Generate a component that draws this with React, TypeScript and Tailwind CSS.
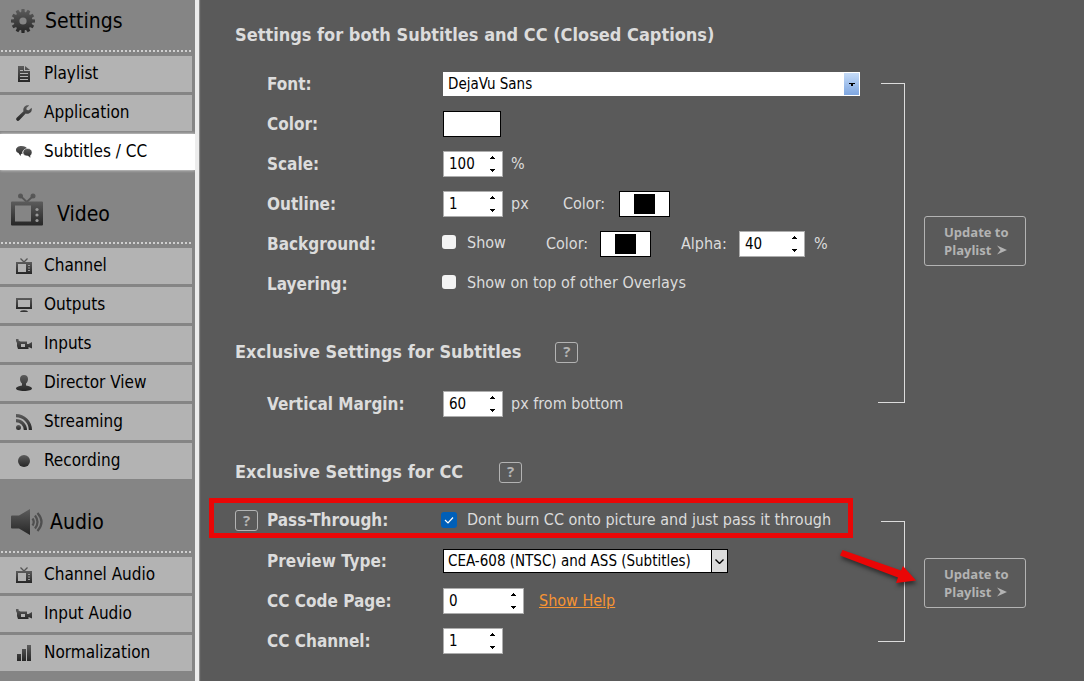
import React from "react";

type IconProps = { className?: string };

function Svg({ box, className, children }: { box: string; className?: string; children: React.ReactNode }) {
  return (
    <svg viewBox={box} className={className} fill="url(#ink)" aria-hidden="true">
      {children}
    </svg>
  );
}

function GearIcon() {
  const teeth = Array.from({ length: 12 }, (_, i) => i * 30);
  return (
    <svg viewBox="0 0 24 24" className="size-6" aria-hidden="true">
      <defs>
        <mask id="gearMask">
          {teeth.map((a) => (
            <path key={a} d="M10 5 L10.500 0 H13.500 L14 5 Z" fill="#fff" transform={`rotate(${a} 12 12)`} />
          ))}
          <circle cx="12" cy="12" r="9.300" fill="#fff" />
          <circle cx="12" cy="12" r="3.600" fill="#000" />
        </mask>
      </defs>
      <rect width="24" height="24" fill="url(#ink)" mask="url(#gearMask)" />
    </svg>
  );
}

function TvBigIcon() {
  return (
    <Svg box="0 0 32 33" className="h-[33px] w-8">
      <circle cx="9.5" cy="3" r="2.5" fill="#585858" />
      <circle cx="22" cy="3" r="2.5" fill="#585858" />
      <path d="M9.5 3 L15.8 9 L22 3" fill="none" stroke="#555" strokeWidth="1.8" />
      <path
        fillRule="evenodd"
        d="M1 8.500H31Q32 8.500 32 9.500V31.500Q32 32.500 31 32.500H1Q0 32.500 0 31.500V9.500Q0 8.500 1 8.500ZM4 12.500V28.500H20V12.500Z"
      />
      <circle cx="26" cy="16.500" r="1.600" fill="#999" />
      <circle cx="26" cy="22" r="1.600" fill="#999" />
      <circle cx="26" cy="27.500" r="1.600" fill="#999" />
    </Svg>
  );
}

function SpeakerIcon() {
  return (
    <Svg box="0 0 32 26" className="h-[26px] w-8">
      <path d="M0 7.500Q0 6.500 1 6.500H8L19 0V26L8 19.500H1Q0 19.500 0 18.500Z" />
      <g fill="none" stroke="#4f4f4f" strokeWidth="2.200">
        <path d="M21.500 9.500Q24 13 21.500 16.500" />
        <path d="M24 6.500Q29 13 24 19.500" />
        <path d="M26.500 4Q34.500 13 26.500 22" />
      </g>
    </Svg>
  );
}

function DocIcon({ className }: IconProps) {
  return (
    <Svg box="0 0 16 16" className={className}>
      <path d="M2 0H8V5H14V16H2Z M9 0L14 4H9Z" />
      <path d="M4 4.500H7M4 7.500H12M4 10.500H12M4 13.500H12" stroke="#b3b3b3" strokeWidth="1" />
    </Svg>
  );
}

function WrenchIcon({ className }: IconProps) {
  return (
    <Svg box="0 0 16 16" className={className}>
      <path d="M15.600 2.700 L12.800 5.300 L10.700 5.100 L10.400 3 L13.200.400 C10.600-.6 7.200 1.300 7.300 5.200 L7.500 6.300 L.7 12.700 C-1 14.600 1.400 17 3.300 15.300 L9.700 8.500 C12.800 9.600 16.800 7 15.600 2.700Z" />
    </Svg>
  );
}

function ChatIcon({ className }: IconProps) {
  return (
    <Svg box="0 0 16 16" className={className}>
      <path d="M5.500 2C8.500 2 10.500 3 11 4.500C8.500 4.800 6.300 6.500 6.300 8.800L6.500 10L5 9.800L4.500 12L2.500 9C1 8.500 0 7.500 0 6C0 3.500 2.500 2 5.500 2Z" />
      <path
        d="M11.500 4.500C14.500 4.500 16 6.300 16 8.300C16 9.800 15.300 10.800 14.500 11.400V14L12 12C9 12.200 7 10.700 7 8.500C7 6 9 4.500 11.500 4.500Z"
        stroke="#fff"
        strokeWidth="0.500"
      />
    </Svg>
  );
}

function TvIcon({ className }: IconProps) {
  return (
    <Svg box="0 0 16 16" className={className}>
      <path d="M4.500.5L8 4L11.500.5" fill="none" stroke="#555" strokeWidth="1.300" />
      <path fillRule="evenodd" d="M0 4H16V16H0ZM2 6V14H10V6Z" />
      <path d="M12 7.500H14M12 10H14M12 12.500H14" stroke="#999" strokeWidth="1" />
    </Svg>
  );
}

function MonitorIcon({ className }: IconProps) {
  return (
    <Svg box="0 0 16 16" className={className}>
      <path fillRule="evenodd" d="M0 1H16V12H0ZM2 3V10H14V3Z" />
      <path d="M4 15Q4.500 13 8 13Q11.500 13 12 15Z" />
    </Svg>
  );
}

function CameraIcon({ className }: IconProps) {
  return (
    <Svg box="0 0 16 16" className={className}>
      <path fillRule="evenodd" d="M0 3H2.500V4.500L4.500 5.500H11V8L12.500 8L16 6V12.500L12.500 11V13H2L1 10V7L0 5ZM5 8V11H9V8Z" />
    </Svg>
  );
}

function PersonIcon({ className }: IconProps) {
  return (
    <Svg box="0 0 16 16" className={className}>
      <path d="M8 0C10.500 0 12 1.500 12 4C12 6 11 7.500 10 8.500V10.500C13 11 16 12 16 13.500C16 15 12.500 16 8 16C3.500 16 0 15 0 13.500C0 12 3 11 6 10.500V8.500C5 7.500 4 6 4 4C4 1.500 5.500 0 8 0Z" />
    </Svg>
  );
}

function FeedIcon({ className }: IconProps) {
  return (
    <Svg box="0 0 16 16" className={className}>
      <circle cx="2.500" cy="13.500" r="2.500" />
      <path d="M0 5A11 11 0 0 1 11 16H7.800A7.800 7.800 0 0 0 0 8.200Z" />
      <path d="M0 0A16 16 0 0 1 16 16H12.800A12.800 12.800 0 0 0 0 3.200Z" />
    </Svg>
  );
}

function DotIcon({ className }: IconProps) {
  return (
    <Svg box="0 0 16 16" className={className}>
      <circle cx="8" cy="8" r="6" />
    </Svg>
  );
}

function BarsIcon({ className }: IconProps) {
  return (
    <Svg box="0 0 16 16" className={className}>
      <path d="M1 9H5V16H1ZM6 4H10V16H6ZM11 0H15V16H11Z" />
    </Svg>
  );
}

type Item = { label: string; icon: (p: IconProps) => React.ReactElement; active?: boolean };

const settingsItems: Item[] = [
  { label: "Playlist", icon: DocIcon },
  { label: "Application", icon: WrenchIcon },
  { label: "Subtitles / CC", icon: ChatIcon, active: true },
];
const videoItems: Item[] = [
  { label: "Channel", icon: TvIcon },
  { label: "Outputs", icon: MonitorIcon },
  { label: "Inputs", icon: CameraIcon },
  { label: "Director View", icon: PersonIcon },
  { label: "Streaming", icon: FeedIcon },
  { label: "Recording", icon: DotIcon },
];
const audioItems: Item[] = [
  { label: "Channel Audio", icon: TvIcon },
  { label: "Input Audio", icon: CameraIcon },
  { label: "Normalization", icon: BarsIcon },
];

function NavGroup({ title, icon, items, head }: { title: string; icon: React.ReactNode; items: Item[]; head: string }) {
  return (
    <section>
      <h2 className={`flex pl-[11px] text-[21px] leading-6 text-black ${head}`}>
        {icon}
        {title}
      </h2>
      <div className="mr-[3px] mb-1 h-[2px] bg-[repeating-linear-gradient(90deg,#858585_0_1px,#d0d0d0_1px_3px,#858585_3px_4px)]" />
      <ul className="flex flex-col gap-[3px]">
        {items.map(({ label, icon: Icon, active }) => (
          <li key={label}>
            <a
              href="#"
              className={
                active
                  ? "flex h-9 items-center gap-3 bg-white pl-4 text-[17px] text-black shadow-[0_0_3px_#eee]"
                  : "mr-[3px] flex h-9 items-center gap-3 bg-[#b3b3b3] pl-4 text-[17px] text-black"
              }
            >
              <Icon className="size-4" />
              <span>{label}</span>
            </a>
          </li>
        ))}
      </ul>
    </section>
  );
}

function Row({ label, htmlFor, children }: { label: string; htmlFor: string; children: React.ReactNode }) {
  return (
    <div className="flex h-10 items-center">
      <label htmlFor={htmlFor} className="w-44 shrink-0 text-[17px] leading-6 font-bold">
        {label}
      </label>
      {children}
    </div>
  );
}

function Spin({ id, value, width, label }: { id: string; value: number; width: string; label?: string }) {
  return (
    <span className={`relative ${width}`}>
      <input
        id={id}
        type="number"
        aria-label={label}
        defaultValue={value}
        className="block h-[26px] w-full appearance-none border border-[#adadad] bg-white pl-[5px] text-[15px] text-black outline-none [appearance:textfield] [&::-webkit-inner-spin-button]:appearance-none"
      />
      <svg viewBox="0 0 5 16" className="pointer-events-none absolute top-[5px] right-2 h-4 w-[5px]" aria-hidden="true">
        <path d="M0 3H5V2H4V1H3V0H2V1H1V2H0ZM0 13H5V14H4V15H3V16H2V15H1V14H0Z" />
      </svg>
    </span>
  );
}

function Swatch({ id, label }: { id: string; label: string }) {
  return (
    <input
      id={id}
      type="color"
      aria-label={label}
      defaultValue="#000000"
      className="h-[26px] w-[51px] appearance-none border border-black bg-white px-[14px] py-[2px] [&::-webkit-color-swatch]:border-0 [&::-webkit-color-swatch-wrapper]:p-0"
    />
  );
}

function Tick({ id, label }: { id: string; label: string }) {
  return (
    <>
      <input
        id={id}
        type="checkbox"
        className="-mt-1 -ml-px size-[14px] appearance-none rounded-[3px] bg-[#f3f3f3] checked:bg-black"
      />
      <label htmlFor={id} className="-mt-[2px] ml-[11px]">
        {label}
      </label>
    </>
  );
}

function Help() {
  return (
    <button
      type="button"
      aria-label="Help"
      className="flex h-[21px] w-[23px] items-center justify-center rounded-[3px] border border-[#b3b3b3] text-[15px] font-bold text-[#b3b3b3] [font-family:'Open_Sans',sans-serif]"
    >
      ?
    </button>
  );
}

function Bracket({ className }: { className: string }) {
  return (
    <div className={`flex w-[27px] shrink-0 flex-col items-end justify-between border-r border-[#dcdcdc] ${className}`}>
      <span className="h-px w-[23px] bg-[#dcdcdc]" />
      <span className="h-px w-full bg-[#dcdcdc]" />
    </div>
  );
}

function UpdateButton({ className }: { className: string }) {
  return (
    <button
      type="button"
      className={`ml-[19px] h-[50px] w-[102px] shrink-0 self-center rounded-[3px] border border-[#b3b3b3] pl-[19px] text-left text-[13px] leading-[18px] font-bold text-[#b3b3b3] [font-family:'Open_Sans',sans-serif] ${className}`}
    >
      Update to
      <br />
      <span className="flex items-center gap-[6px]">
        Playlist
        <svg viewBox="0 0 10 10" className="size-[10px]" fill="currentColor" aria-hidden="true">
          <path d="M0 0.500L10 5L0 9.500L3.500 5Z" />
        </svg>
      </span>
    </button>
  );
}

export default function App() {
  return (
    <div className="flex min-h-screen bg-[#5a5a5a] text-base [font-family:'DejaVu_Sans_Condensed','DejaVu_Sans',sans-serif]">
      <svg className="absolute size-0" aria-hidden="true">
        <defs>
          <linearGradient id="ink" x1="0" y1="0" x2="0" y2="1">
            <stop offset="0" stopColor="#5c5c5c" />
            <stop offset="1" stopColor="#262626" />
          </linearGradient>
        </defs>
      </svg>

      <nav className="w-[199px] shrink-0 border-r-4 border-[#ececec] bg-[#858585] shadow-[1px_0_1px_#888]">
        <NavGroup title="Settings" icon={<GearIcon />} items={settingsItems} head="h-[50px] items-start gap-[10px] pt-[9px]" />
        <NavGroup title="Video" icon={<TvBigIcon />} items={videoItems} head="h-[72px] items-end gap-[14px] pb-4" />
        <NavGroup title="Audio" icon={<SpeakerIcon />} items={audioItems} head="h-[72px] items-center gap-[7px] pt-[14px]" />
      </nav>

      <main className="min-w-0 flex-1 pt-[23px] pl-9 text-[#dcdcdc]">
        <h1 className="mb-[17px] text-lg leading-6 font-bold">Settings for both Subtitles and CC (Closed Captions)</h1>

        <section className="flex">
          <div className="max-w-[643px] flex-1">
            <div className="pl-8">
              <Row label="Font:" htmlFor="font">
                <span className="relative mr-[18px] flex-1">
                  <select id="font" className="block h-6 w-full appearance-none bg-white pl-[5px] text-[15px] text-black">
                    <option>DejaVu Sans</option>
                  </select>
                  <span className="pointer-events-none absolute top-px right-px flex h-[22px] w-[15px] items-center justify-center bg-linear-to-b from-[#c6dcf8] to-[#7ea6e0]">
                    <svg viewBox="0 0 6 3" className="h-[3px] w-[6px]" aria-hidden="true">
                      <path d="M0 0H6V1H4V3H2V1H0Z" />
                    </svg>
                  </span>
                </span>
              </Row>
              <Row label="Color:" htmlFor="color">
                <input
                  id="color"
                  type="color"
                  defaultValue="#ffffff"
                  className="h-[26px] w-[58px] appearance-none border border-black bg-white p-0 [&::-webkit-color-swatch]:border-0 [&::-webkit-color-swatch-wrapper]:p-0"
                />
              </Row>
              <Row label="Scale:" htmlFor="scale">
                <Spin id="scale" value={100} width="w-[60px]" />
                <span className="ml-2">%</span>
              </Row>
              <Row label="Outline:" htmlFor="outline">
                <Spin id="outline" value={1} width="w-[60px]" />
                <span className="ml-2 w-[52px]">px</span>
                <label htmlFor="outline-color" className="w-14">
                  Color:
                </label>
                <Swatch id="outline-color" label="Outline color" />
              </Row>
              <Row label="Background:" htmlFor="bg-show">
                <span className="flex w-[103px] items-center">
                  <Tick id="bg-show" label="Show" />
                </span>
                <label htmlFor="bg-color" className="w-[54px]">
                  Color:
                </label>
                <Swatch id="bg-color" label="Background color" />
                <label htmlFor="alpha" className="ml-[30px] w-[58px]">
                  Alpha:
                </label>
                <Spin id="alpha" value={40} width="w-[66px]" />
                <span className="ml-[9px]">%</span>
              </Row>
              <Row label="Layering:" htmlFor="layering">
                <Tick id="layering" label="Show on top of other Overlays" />
              </Row>
            </div>
            <h2 className="mt-9 mb-5 flex h-6 items-center gap-[34px] text-lg font-bold">
              Exclusive Settings for Subtitles <Help />
            </h2>
            <div className="pl-8">
              <Row label="Vertical Margin:" htmlFor="margin">
                <Spin id="margin" value={60} width="w-[60px]" />
                <span className="ml-2">px from bottom</span>
              </Row>
            </div>
          </div>
          <Bracket className="mt-[19px] mb-[21px]" />
          <UpdateButton className="mb-[6px]" />
        </section>

        <h2 className="mt-9 mb-4 flex h-6 items-center gap-9 text-lg font-bold">
          Exclusive Settings for CC <Help />
        </h2>

        <section className="flex">
          <div className="max-w-[643px] flex-1">
            <div className="relative flex h-10 items-center">
              <span className="w-8 shrink-0">
                <Help />
              </span>
              <label htmlFor="pass" className="w-44 shrink-0 text-[17px] leading-6 font-bold">
                Pass-Through:
              </label>
              <span className="relative -ml-[2px] size-4">
                <input
                  id="pass"
                  type="checkbox"
                  defaultChecked
                  className="peer block size-4 appearance-none rounded-[3px] bg-white checked:bg-[#005fb8]"
                />
                <svg viewBox="0 0 16 16" className="pointer-events-none absolute inset-0 hidden peer-checked:block" aria-hidden="true">
                  <path d="M4 8L7 11L12 5.500" fill="none" stroke="#fff" strokeWidth="1.200" />
                </svg>
              </span>
              <label htmlFor="pass" className="ml-[10px]">
                Dont burn CC onto picture and just pass it through
              </label>
              <div className="pointer-events-none absolute -top-[2px] -left-[26px] h-10 w-[644px] border-[5px] border-[#ea0606]" />
              <svg
                viewBox="0 0 86 50"
                className="pointer-events-none absolute top-[46px] left-[600px] h-[50px] w-[86px] drop-shadow-[1px_3px_2px_rgba(0,0,0,0.5)]"
                fill="#ea0606"
                aria-hidden="true"
              >
                <path d="M7.500 4L66 24.500L68 20L81 34.500L61 37L63 31.500L5 9.500Z" />
              </svg>
            </div>
            <div className="pt-px pl-8">
              <Row label="Preview Type:" htmlFor="preview">
                <span className="relative w-[285px]">
                  <select
                    id="preview"
                    className="block h-6 w-full appearance-none border border-black bg-white pl-1 text-[15px] leading-5 text-black"
                  >
                    <option>CEA-608 (NTSC) and ASS (Subtitles)</option>
                  </select>
                  <span className="pointer-events-none absolute top-px right-px flex h-[22px] w-4 items-center justify-center border-l border-black bg-[#dcdcdc]">
                    <svg viewBox="0 0 9 5" className="h-[5px] w-[9px]" aria-hidden="true">
                      <path d="M0.500 0.500L4.500 4.500L8.500 0.500" fill="none" stroke="#000" strokeWidth="1.400" />
                    </svg>
                  </span>
                </span>
              </Row>
              <Row label="CC Code Page:" htmlFor="code-page">
                <Spin id="code-page" value={0} width="w-[81px]" />
                <a href="#" className="ml-[15px] text-[#f79433] underline">
                  Show Help
                </a>
              </Row>
              <Row label="CC Channel:" htmlFor="cc-channel">
                <Spin id="cc-channel" value={1} width="w-[60px]" />
              </Row>
            </div>
          </div>
          <Bracket className="mt-[21px] mb-[19px]" />
          <UpdateButton className="mt-[5px]" />
        </section>
      </main>
    </div>
  );
}
